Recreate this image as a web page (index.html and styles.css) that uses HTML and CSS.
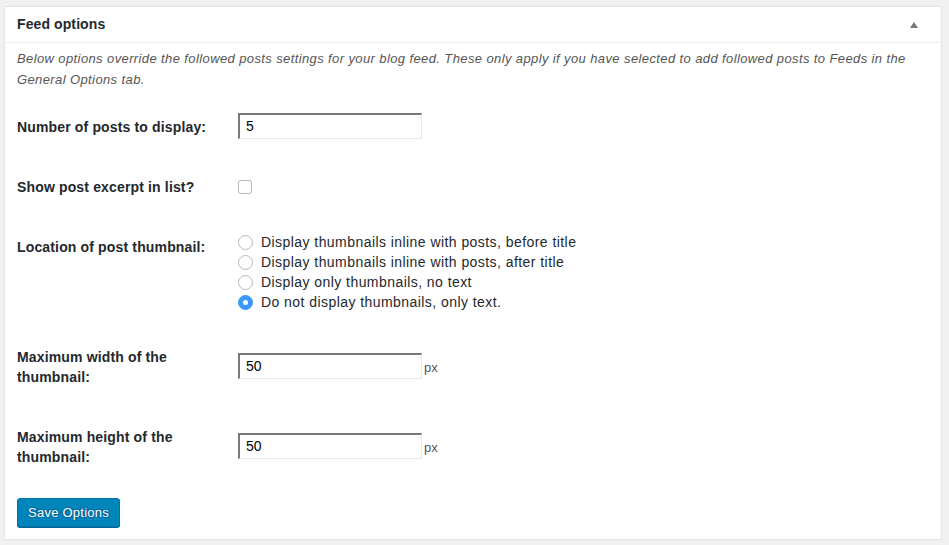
FILE: index.html
```html
<!DOCTYPE html>
<html>
<head>
<meta charset="utf-8">
<link rel="stylesheet" href="styles.css">
</head>
<body>
<div class="postbox">
  <div class="hndle">
    <h2 class="title">Feed options</h2>
    <span class="toggle"></span>
  </div>
  <div class="inside">
    <p class="desc">Below options override the followed posts settings for your blog feed. These only apply if you have selected to add followed posts to Feeds in the General Options tab.</p>
    <div class="row">
      <div class="label">Number of posts to display:</div>
      <div class="field"><span class="input">5</span></div>
    </div>
    <div class="row">
      <div class="label">Show post excerpt in list?</div>
      <div class="field"><span class="checkbox"></span></div>
    </div>
    <div class="row">
      <div class="label">Location of post thumbnail:</div>
      <div class="field radios">
        <div class="radio-line"><span class="radio"></span>Display thumbnails inline with posts, before title</div>
        <div class="radio-line"><span class="radio"></span>Display thumbnails inline with posts, after title</div>
        <div class="radio-line"><span class="radio"></span>Display only thumbnails, no text</div>
        <div class="radio-line"><span class="radio checked"></span>Do not display thumbnails, only text.</div>
      </div>
    </div>
    <div class="row">
      <div class="label">Maximum width of the<br>thumbnail:</div>
      <div class="field"><span class="input">50</span><span class="unit">px</span></div>
    </div>
    <div class="row">
      <div class="label">Maximum height of the<br>thumbnail:</div>
      <div class="field"><span class="input">50</span><span class="unit">px</span></div>
    </div>
    <div class="actions"><span class="button">Save Options</span></div>
  </div>
</div>
</body>
</html>
```
FILE: styles.css
```css
html, body {
  margin: 0;
  padding: 0;
  background: #f1f1f1;
  font-family: "Liberation Sans", Arial, sans-serif;
  color: #23282d;
}
.postbox {
  margin: 6px 7px 0 4px;
  background: #fff;
  border: 1px solid #e5e5e5;
  box-shadow: 0 1px 1px rgba(0,0,0,.04);
}
.hndle {
  height: 35px;
  border-bottom: 1px solid #eee;
  display: flex;
  align-items: center;
  justify-content: space-between;
  padding: 0 23px 0 12px;
}
.title {
  margin: 0;
  font-size: 14px;
  font-weight: bold;
  color: #23282d;
  line-height: 1.4;
  letter-spacing: 0.1px;
}
.toggle {
  width: 0;
  height: 0;
  border-left: 4px solid transparent;
  border-right: 4px solid transparent;
  border-bottom: 6px solid #72777c;
}
.inside {
  padding: 0 12px 12px;
}
.desc {
  margin: 5px 0 7px;
  font-size: 13px;
  line-height: 21px;
  font-style: italic;
  color: #555;
  letter-spacing: 0.39px;
}
.row {
  display: flex;
  align-items: center;
}
.label {
  width: 221px;
  flex: none;
  align-self: flex-start;
  padding: 20px 0;
  font-size: 14px;
  line-height: 20px;
  font-weight: bold;
  color: #23282d;
  letter-spacing: 0.15px;
}
.field {
  padding: 15px 0;
  display: flex;
  align-items: center;
  font-size: 14px;
  color: #32373c;
}
.input {
  box-sizing: border-box;
  width: 184px;
  height: 26px;
  margin: 0 0 2px;
  border-top: 2px solid #7a7a7a;
  border-left: 2px solid #7a7a7a;
  border-right: 1px solid #eaeaea;
  border-bottom: 1px solid #eaeaea;
  padding: 0 6px;
  font-size: 14px;
  line-height: 23px;
  color: #000;
  background: #fff;
}
.unit {
  margin-left: 2px;
  font-size: 13px;
  color: #555;
}
.checkbox {
  box-sizing: border-box;
  width: 14px;
  height: 14px;
  border: 1px solid #b4b9be;
  border-radius: 3px;
  background: #fff;
  margin: 8px 0;
}
.radios {
  flex-direction: column;
  align-items: flex-start;
}
.radio-line {
  display: flex;
  align-items: center;
  height: 20px;
  line-height: 20px;
  font-size: 14px;
  color: #23282d;
  letter-spacing: 0.44px;
}
.radio {
  box-sizing: border-box;
  width: 15px;
  height: 15px;
  border: 1px solid #b4b9be;
  border-radius: 50%;
  background: #fff;
  margin-right: 8px;
  display: flex;
  align-items: center;
  justify-content: center;
}
.radio.checked {
  background: #3b99fc;
  border-color: #3b99fc;
}
.radio.checked::after {
  content: "";
  width: 5px;
  height: 5px;
  border-radius: 50%;
  background: #fff;
}
.actions {
  margin-top: 11px;
}
.button {
  display: inline-block;
  box-sizing: border-box;
  height: 29px;
  padding: 0 10px;
  line-height: 27px;
  font-size: 13px;
  letter-spacing: 0.25px;
  color: #fff;
  background: #0085ba;
  border: 1px solid #0073aa;
  border-radius: 3px;
  box-shadow: 0 1px 0 #006799;
  text-shadow: 0 -1px 1px #006799, 1px 0 1px #006799, 0 1px 1px #006799, -1px 0 1px #006799;
}
```
